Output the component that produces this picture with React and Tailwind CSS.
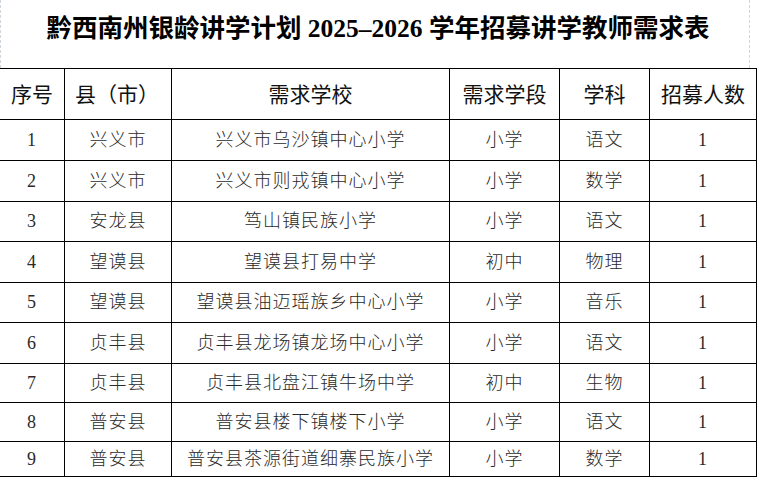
import React from "react";

const rows = [
  ["1", "兴义市", "兴义市乌沙镇中心小学", "小学", "语文", "1", 41],
  ["2", "兴义市", "兴义市则戎镇中心小学", "小学", "数学", "1", 41],
  ["3", "安龙县", "笃山镇民族小学", "小学", "语文", "1", 40],
  ["4", "望谟县", "望谟县打易中学", "初中", "物理", "1", 41],
  ["5", "望谟县", "望谟县油迈瑶族乡中心小学", "小学", "音乐", "1", 40],
  ["6", "贞丰县", "贞丰县龙场镇龙场中心小学", "小学", "语文", "1", 41],
  ["7", "贞丰县", "贞丰县北盘江镇牛场中学", "初中", "生物", "1", 39],
  ["8", "普安县", "普安县楼下镇楼下小学", "小学", "语文", "1", 39],
  ["9", "普安县", "普安县茶源街道细寨民族小学", "小学", "数学", "1", 35],
];

const headers = ["序号", "县（市）", "需求学校", "需求学段", "学科", "招募人数"];

export default function App() {
  return (
    <div className="w-[760px] h-[478px] bg-white overflow-hidden">
      <div className="w-[750px] h-[68px] border-l border-r border-dashed border-gray-300 pt-[16px] pl-[6px] text-center text-[25.5px] leading-[26px] font-bold text-black font-['Liberation_Serif','Noto_Sans_CJK_SC',serif]">
        黔西南州银龄讲学计划 2025–2026 学年招募讲学教师需求表
      </div>
      <div className="w-[757px] border-t border-black">
        <div className="grid grid-cols-[65px_107px_278px_110px_90px_107px] h-[51px]">
          {headers.map((h, i) => (
            <div
              key={i}
              className={`flex items-center border-b border-r border-black text-[21px] text-[#111] font-['Noto_Sans_CJK_SC',sans-serif] ${
                i === 1 ? "justify-start pl-[10px]" : "justify-center"
              }`}
            >
              {h}
            </div>
          ))}
        </div>
        {rows.map((r, ri) => (
          <div
            key={ri}
            className="grid grid-cols-[65px_107px_278px_110px_90px_107px]"
            style={{ height: r[6] }}
          >
            {r.slice(0, 6).map((c, ci) => (
              <div
                key={ci}
                className="flex items-center justify-center border-b border-r border-black text-[18px] tracking-[1px] font-light text-[#2a2a2a] font-['Liberation_Serif','Noto_Sans_CJK_SC',serif]"
              >
                {c}
              </div>
            ))}
          </div>
        ))}
      </div>
    </div>
  );
}
